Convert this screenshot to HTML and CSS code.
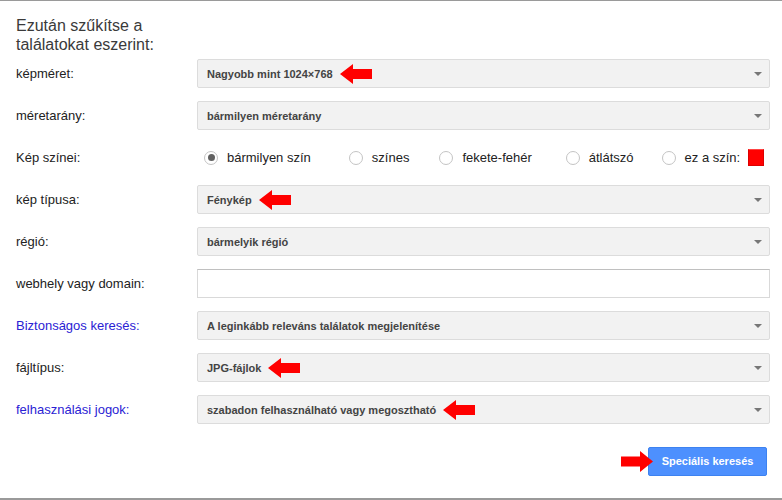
FILE: index.html
```
<!DOCTYPE html>
<html>
<head>
    <meta charset="utf-8">
    <title>Speciális keresés</title>
    <link rel="stylesheet" href="styles.css">
</head>
<body>
<div class="page">
    <h1 class="title">Ezután szűkítse a<br>találatokat eszerint:</h1>
    <div class="form">
        <label class="lbl">képméret:</label>
        <div class="sel"><span>Nagyobb mint 1024×768</span><svg class="arr" width="32" height="20" viewBox="0 0 32 20"><polygon points="0,10 13,0 13,5 32,5 32,15 13,15 13,20"/></svg></div>

        <label class="lbl">méretarány:</label>
        <div class="sel"><span>bármilyen méretarány</span></div>

        <label class="lbl">Kép színei:</label>
        <div class="radios">
            <span class="opt"><i class="radio on"></i>bármilyen szín</span>
            <span class="opt"><i class="radio"></i>színes</span>
            <span class="opt"><i class="radio"></i>fekete-fehér</span>
            <span class="opt"><i class="radio"></i>átlátszó</span>
            <span class="opt"><i class="radio"></i>ez a szín:<b class="swatch"></b></span>
        </div>

        <label class="lbl">kép típusa:</label>
        <div class="sel"><span>Fénykép</span><svg class="arr" width="32" height="20" viewBox="0 0 32 20"><polygon points="0,10 13,0 13,5 32,5 32,15 13,15 13,20"/></svg></div>

        <label class="lbl">régió:</label>
        <div class="sel"><span>bármelyik régió</span></div>

        <label class="lbl">webhely vagy domain:</label>
        <div class="inp"></div>

        <label class="lbl link">Biztonságos keresés:</label>
        <div class="sel"><span>A leginkább releváns találatok megjelenítése</span></div>

        <label class="lbl">fájltípus:</label>
        <div class="sel"><span>JPG-fájlok</span><svg class="arr" width="32" height="20" viewBox="0 0 32 20"><polygon points="0,10 13,0 13,5 32,5 32,15 13,15 13,20"/></svg></div>

        <label class="lbl link">felhasználási jogok:</label>
        <div class="sel"><span>szabadon felhasználható vagy megosztható</span><svg class="arr" width="32" height="20" viewBox="0 0 32 20"><polygon points="0,10 13,0 13,5 32,5 32,15 13,15 13,20"/></svg></div>
    </div>
    <div class="actions">
        <svg class="arr-r" width="32" height="21" viewBox="0 0 32 21"><polygon points="32,10.5 19,0 19,5.5 0,5.5 0,15.5 19,15.5 19,21"/></svg>
        <a href="javascript:;" class="btn">Speciális keresés</a>
    </div>
</div>
</body>
</html>
```

FILE: styles.css
```
html,body{margin:0;padding:0;background:#fff;}
body{font-family:"Liberation Sans",Arial,Helvetica,sans-serif;color:#222;}

.page{
    height:500px;
    box-sizing:border-box;
    border-top:1px solid #9a9a9a;
    border-bottom:2px solid #9a9a9a;
    padding:15px 12px 0 16px;
}
.title{
    margin:0 0 5px;
    font-size:16px;
    font-weight:normal;
    line-height:19px;
    color:#3a3a3a;
}

/*form rows*/
.form{
    display:grid;
    grid-template-columns:181px 1fr;
    grid-auto-rows:29px;
    row-gap:13px;
    align-items:center;
}
.lbl{
    font-size:13px;
    color:#222;
}
.lbl.link{color:#2a22d4;}

.sel{
    position:relative;
    height:29px;
    box-sizing:border-box;
    display:flex;
    align-items:center;
    padding-left:9px;
    background:#f2f2f2;
    border:1px solid #dcdcdc;
    border-radius:2px;
    font-size:11px;
    font-weight:bold;
    color:#444;
}
.sel:after{
    content:"";
    position:absolute;
    right:7px;
    top:12px;
    border-left:4px solid transparent;
    border-right:4px solid transparent;
    border-top:4px solid #777;
}
.arr{
    margin-left:7px;
    fill:#f00;
}

.inp{
    height:29px;
    box-sizing:border-box;
    background:#fff;
    border:1px solid #d9d9d9;
    border-top-color:#c0c0c0;
}

/*radio*/
.radios{
    display:flex;
    align-items:center;
    gap:28px;
    padding-left:7px;
    font-size:13px;
    white-space:nowrap;
}
.opt{
    display:flex;
    align-items:center;
    flex-shrink:0;
}
.opt:nth-child(1){margin-right:10px;}
.opt:nth-child(2){margin-right:2px;}
.opt:nth-child(3){margin-right:6px;}
.radio{
    width:14px;
    height:14px;
    box-sizing:border-box;
    border:1px solid #c4c4c4;
    border-radius:50%;
    margin-right:9px;
    display:flex;
    align-items:center;
    justify-content:center;
    flex-shrink:0;
}
.radio.on:after{
    content:"";
    width:7px;
    height:7px;
    border-radius:50%;
    background:#616161;
}
.swatch{
    width:16px;
    height:17px;
    box-sizing:border-box;
    margin-left:8px;
    background:#f00;
    border:1px solid #d00;
    border-top-color:#f44;
}

/*button*/
.actions{
    display:flex;
    justify-content:flex-end;
    align-items:center;
    margin-top:23px;
    padding-right:3px;
}
.arr-r{
    fill:#f00;
    margin-right:-5px;
    position:relative;
    z-index:1;
}
.btn{
    width:119px;
    height:29px;
    box-sizing:border-box;
    line-height:27px;
    text-align:center;
    background:#4d90fe;
    border:1px solid #3d82f0;
    border-radius:2px;
    color:#fff;
    font-size:11px;
    font-weight:bold;
    text-decoration:none;
}
```
